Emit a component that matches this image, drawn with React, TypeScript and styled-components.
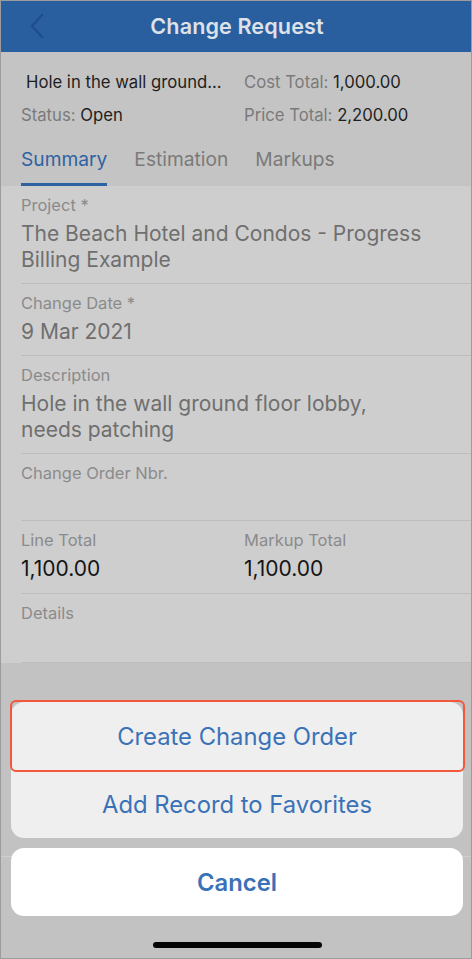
import React from "react";
import styled, { createGlobalStyle } from "styled-components";

const Global = createGlobalStyle`
  html, body { margin: 0; padding: 0; background: #c2c2c2; }
  * { box-sizing: border-box; }
  body { font-family: Inter, "Open Sans", "Liberation Sans", sans-serif; }
`;

const Screen = styled.div`
  position: relative;
  width: 472px;
  height: 959px;
  border: 1px solid #9c9c9c;
  background: #c2c2c2;
  display: flex;
  flex-direction: column;
  overflow: hidden;
`;

const NavBar = styled.div`
  height: 51px;
  padding-bottom: 2px;
  background: #2a5f9f;
  display: flex;
  align-items: center;
  justify-content: center;
  position: relative;
  flex-shrink: 0;
`;

const BackButton = styled.div`
  position: absolute;
  left: 25px;
  top: 12px;
  width: 22px;
  height: 26px;
  display: flex;
  align-items: center;
  justify-content: center;
`;

const Title = styled.div`
  font-size: 21.6px;
  font-weight: 600;
  color: #dde1e8;
  letter-spacing: 0.1px;
  margin-left: 2px;
`;

const Header = styled.div`
  background: #c4c4c4;
  padding: 19px 0 0 0;
  flex-shrink: 0;
`;

const InfoGrid = styled.div`
  display: grid;
  grid-template-columns: 223px 1fr;
  row-gap: 11px;
  padding-left: 20px;
`;

const InfoCell = styled.div<{ $indent?: number }>`
  font-size: 16.7px;
  line-height: 22px;
  color: #1e1e1e;
  padding-left: ${(p) => p.$indent ?? 0}px;
  white-space: nowrap;
`;

const InfoLabel = styled.span`
  color: #7a7a7a;
`;

const Tabs = styled.div`
  display: flex;
  gap: 27px;
  padding-left: 20px;
  margin-top: 21px;
`;

const Tab = styled.div<{ $active?: boolean }>`
  font-size: 19.2px;
  line-height: 24px;
  color: ${(p) => (p.$active ? "#2e63a3" : "#7a7a7a")};
  padding-bottom: 12px;
  border-bottom: 3px solid ${(p) => (p.$active ? "#2e63a3" : "transparent")};
`;

const Form = styled.div`
  background: #cecece;
  padding-left: 20px;
  flex-shrink: 0;
`;

const Field = styled.div<{ $bottom?: number }>`
  padding: 9px 0 ${(p) => p.$bottom ?? 10}px 0;
  border-bottom: 1px solid #bdbdbd;
`;

const FieldRow = styled.div`
  display: grid;
  grid-template-columns: 223px 1fr;
`;

const Label = styled.div`
  font-size: 16.5px;
  line-height: 20px;
  color: #8b8b8b;
`;

const Value = styled.div<{ $dark?: boolean }>`
  margin-top: 6px;
  font-size: 21px;
  line-height: 26px;
  min-height: 26px;
  color: ${(p) => (p.$dark ? "#151515" : "#6f6f6f")};
  padding-right: 44px;
`;

const Footer = styled.div`
  flex: 1;
  background: #c2c2c2;
  display: flex;
  flex-direction: column;
`;

const FooterBar = styled.div`
  height: 194px;
  border-bottom: 1px solid #cfcfcf;
`;

const Sheet = styled.div`
  position: absolute;
  left: 10px;
  right: 8px;
  top: 701px;
  display: flex;
  flex-direction: column;
  gap: 10px;
`;

const Group = styled.div`
  background: #efefef;
  border-radius: 13px;
  display: flex;
  flex-direction: column;
`;

const SheetButton = styled.div<{ $highlight?: boolean; $bold?: boolean; $white?: boolean }>`
  position: relative;
  height: 68px;
  display: flex;
  align-items: center;
  justify-content: center;
  font-size: 23.8px;
  font-weight: ${(p) => (p.$bold ? 600 : 400)};
  color: #3a72b8;
  background: ${(p) => (p.$white ? "#ffffff" : "transparent")};
  border-radius: ${(p) => (p.$white ? "13px" : "0")};
  &::after {
    content: "";
    display: ${(p) => (p.$highlight ? "block" : "none")};
    position: absolute;
    left: -1px;
    right: -2px;
    top: -2px;
    bottom: -2px;
    border: 2px solid #f2583a;
    border-radius: 6px;
  }
`;

const HomeIndicator = styled.div`
  position: absolute;
  left: 152px;
  top: 941px;
  width: 169px;
  height: 6px;
  border-radius: 3px;
  background: #050505;
`;

export default function App() {
  return (
    <>
      <Global />
      <Screen>
        <NavBar>
          <BackButton>
            <svg width="14" height="26" viewBox="0 0 14 26">
              <path d="M12 2 L2 13 L12 24" fill="none" stroke="#1e4f8c" strokeWidth="2.6" strokeLinecap="round" strokeLinejoin="round" />
            </svg>
          </BackButton>
          <Title>Change Request</Title>
        </NavBar>
        <Header>
          <InfoGrid>
            <InfoCell $indent={5}>Hole in the wall ground...</InfoCell>
            <InfoCell>
              <InfoLabel>Cost Total:</InfoLabel> 1,000.00
            </InfoCell>
            <InfoCell>
              <InfoLabel>Status:</InfoLabel> Open
            </InfoCell>
            <InfoCell>
              <InfoLabel>Price Total:</InfoLabel> 2,200.00
            </InfoCell>
          </InfoGrid>
          <Tabs>
            <Tab $active>Summary</Tab>
            <Tab>Estimation</Tab>
            <Tab>Markups</Tab>
          </Tabs>
        </Header>
        <Form>
          <Field>
            <Label>Project *</Label>
            <Value>The Beach Hotel and Condos - Progress Billing Example</Value>
          </Field>
          <Field>
            <Label>Change Date *</Label>
            <Value>9 Mar 2021</Value>
          </Field>
          <Field>
            <Label>Description</Label>
            <Value>Hole in the wall ground floor lobby, needs patching</Value>
          </Field>
          <Field $bottom={5}>
            <Label>Change Order Nbr.</Label>
            <Value />
          </Field>
          <Field $bottom={11}>
            <FieldRow>
              <div>
                <Label>Line Total</Label>
                <Value $dark>1,100.00</Value>
              </div>
              <div>
                <Label>Markup Total</Label>
                <Value $dark>1,100.00</Value>
              </div>
            </FieldRow>
          </Field>
          <Field $bottom={7}>
            <Label>Details</Label>
            <Value />
          </Field>
        </Form>
        <Footer>
          <FooterBar />
        </Footer>
        <Sheet>
          <Group>
            <SheetButton $highlight>Create Change Order</SheetButton>
            <SheetButton>Add Record to Favorites</SheetButton>
          </Group>
          <SheetButton $white $bold>Cancel</SheetButton>
        </Sheet>
        <HomeIndicator />
      </Screen>
    </>
  );
}
